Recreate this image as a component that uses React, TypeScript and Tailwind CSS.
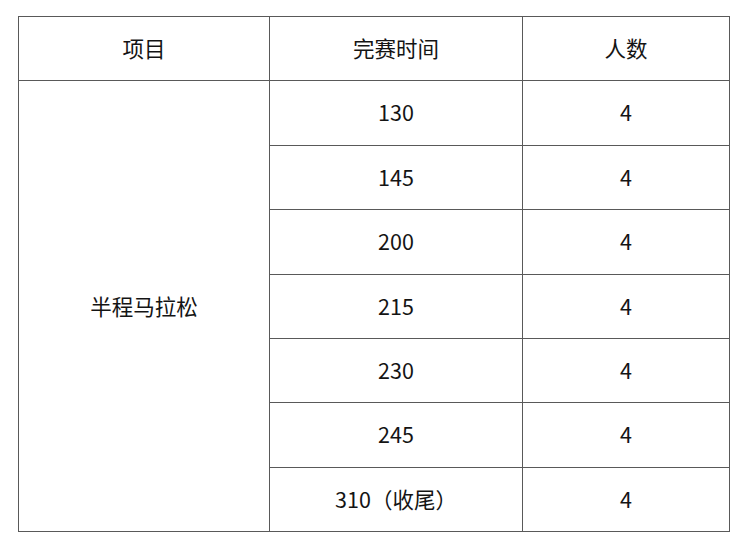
import React from "react";

const rows = ["130", "145", "200", "215", "230", "245", "310（收尾）"];

export default function App() {
  const cell =
    "border border-[#595959] text-center align-middle p-0 text-[21.5px] leading-none pb-[2px] text-[#141414]";
  return (
    <div
      className="w-[745px] h-[546px] bg-white pt-[16px] pl-[18px]"
      style={{ fontFamily: '"Noto Sans CJK SC", "Noto Sans", sans-serif' }}
    >
      <table className="border-collapse w-[711px] table-fixed">
        <colgroup>
          <col className="w-[251px]" />
          <col className="w-[253px]" />
          <col className="w-[207px]" />
        </colgroup>
        <tbody>
          <tr className="h-[64.4px]">
            <td className={cell}>项目</td>
            <td className={cell}>完赛时间</td>
            <td className={cell}>人数</td>
          </tr>
          {rows.map((r, i) => (
            <tr key={r} className="h-[64.4px]">
              {i === 0 && (
                <td className={cell} rowSpan={7}>
                  半程马拉松
                </td>
              )}
              <td className={cell}>{r}</td>
              <td className={cell}>4</td>
            </tr>
          ))}
        </tbody>
      </table>
    </div>
  );
}
